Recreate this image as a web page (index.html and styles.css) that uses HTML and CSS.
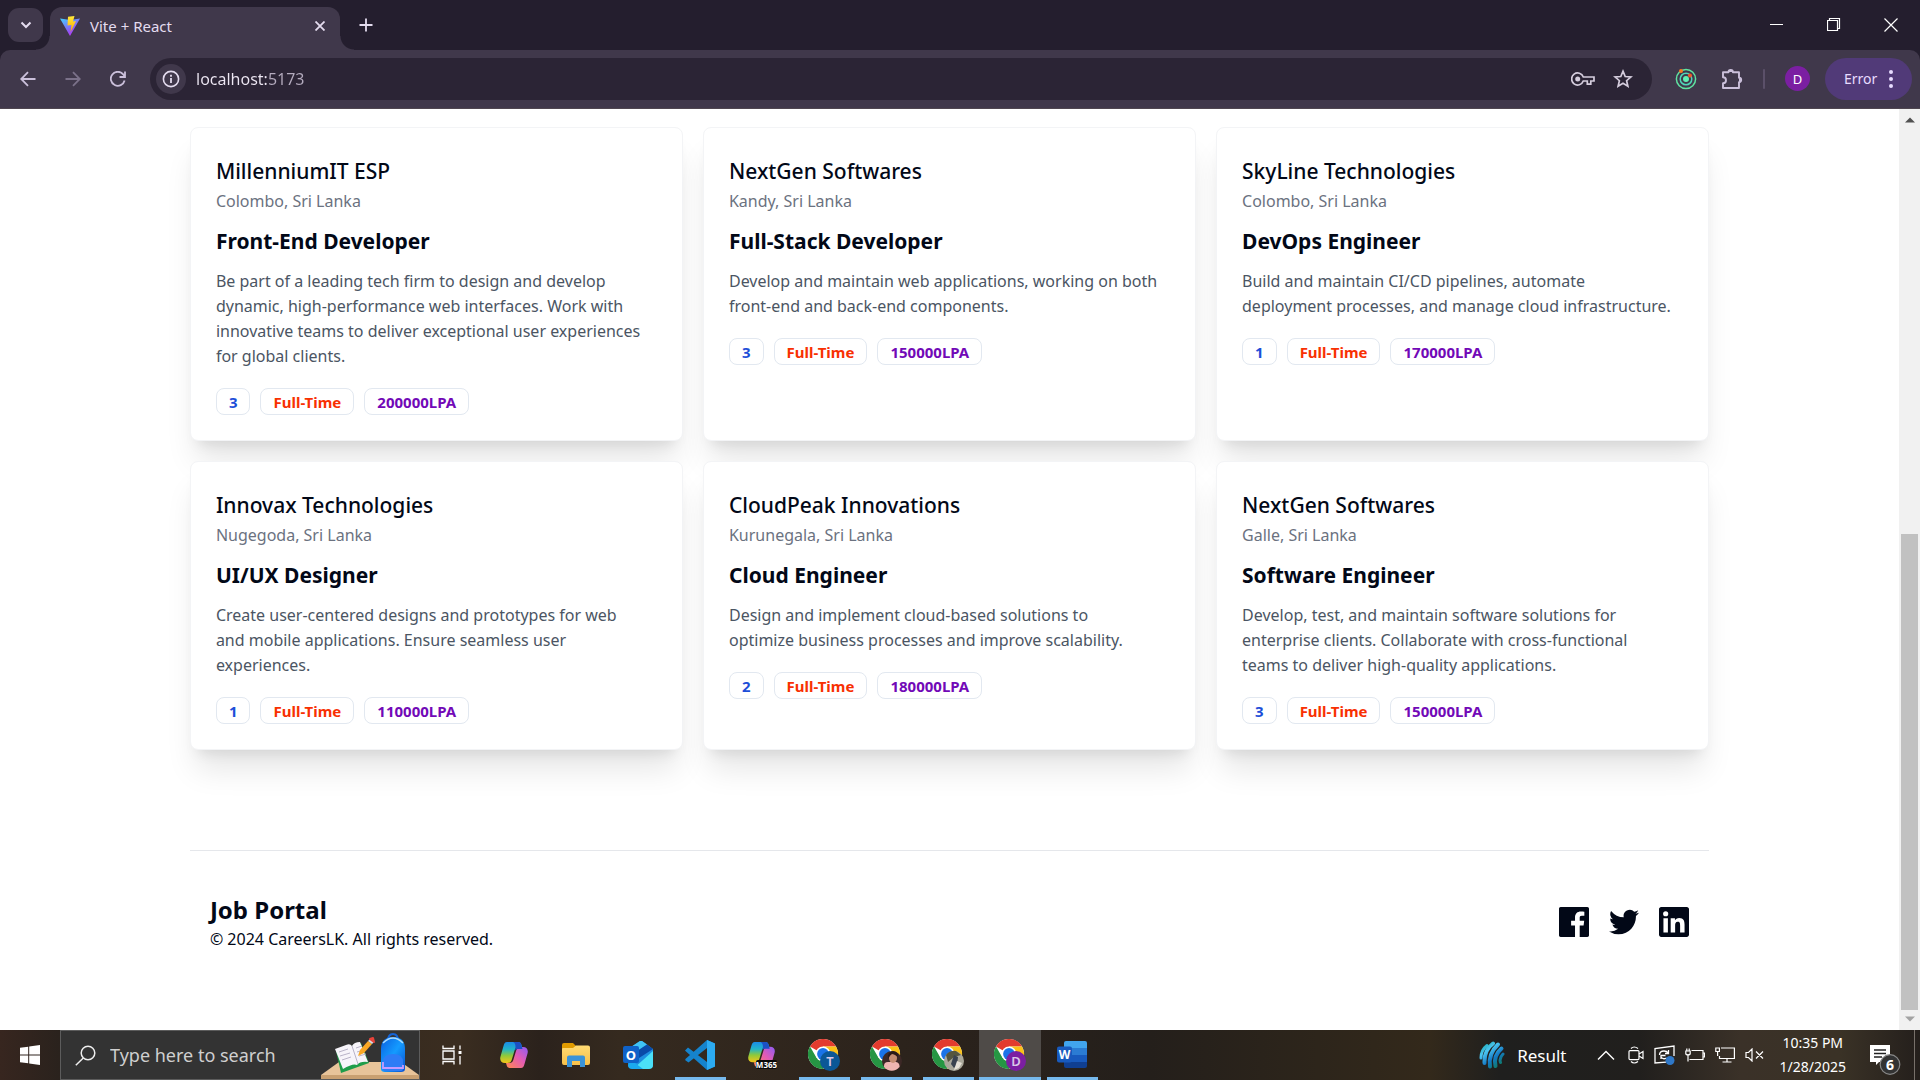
FILE: index.html
```html
<!DOCTYPE html>
<html lang="en">
<head>
<meta charset="utf-8">
<meta name="viewport" content="width=device-width, initial-scale=1">
<title>Vite + React</title>
<link rel="stylesheet" href="styles.css">
</head>
<body>
<svg class="defs" aria-hidden="true">
  <defs>
    <linearGradient id="viteBody" x1="0" y1="0" x2=".6" y2="1"><stop offset="0" stop-color="#41d1ff"/><stop offset=".7" stop-color="#8c5cf5"/><stop offset="1" stop-color="#bd34fe"/></linearGradient>
    <linearGradient id="viteBolt" x1="0" y1="0" x2="0" y2="1"><stop offset="0" stop-color="#ffea3a"/><stop offset="1" stop-color="#ffa800"/></linearGradient>
    <linearGradient id="coLeft" x1="0" y1="0" x2="0" y2="1"><stop offset="0" stop-color="#1a8be8"/><stop offset=".35" stop-color="#22b5c8"/><stop offset=".65" stop-color="#8fc93a"/><stop offset="1" stop-color="#f5c518"/></linearGradient>
    <linearGradient id="coRight" x1="0" y1="1" x2="1" y2="0"><stop offset="0" stop-color="#8b5cf6"/><stop offset=".45" stop-color="#e35bb4"/><stop offset="1" stop-color="#ff8a4c"/></linearGradient>
    <linearGradient id="folder" x1="0" y1="0" x2="0" y2="1"><stop offset="0" stop-color="#ffdb73"/><stop offset="1" stop-color="#f7c04a"/></linearGradient>
    <linearGradient id="bag" x1="0" y1="0" x2="1" y2="1"><stop offset="0" stop-color="#0a5fe0"/><stop offset=".5" stop-color="#149bff"/><stop offset="1" stop-color="#0a50d0"/></linearGradient>
    <linearGradient id="ball" gradientUnits="userSpaceOnUse" x1="2" y1="2" x2="22" y2="28"><stop offset="0" stop-color="#0fa3a3"/><stop offset=".3" stop-color="#4cc6f2"/><stop offset=".6" stop-color="#1479c4"/><stop offset="1" stop-color="#0b7a4a"/></linearGradient>
    <symbol id="chrome" viewBox="0 0 32 32">
      <circle cx="15" cy="15" r="15" fill="#fff"/>
      <path d="M15 15 L2 7.500 A15 15 0 0 1 28 7.500 L15 7.500Z" fill="#e33b2e"/>
      <path d="M28 7.500 A15 15 0 0 1 15 30 L21.500 18.750 L15 7.500Z" fill="#fbc116"/>
      <path d="M2 7.500 A15 15 0 0 0 15 30 L21.500 18.750 L8.500 18.750Z" fill="#269643"/>
      <circle cx="15" cy="15" r="7.500" fill="#fff"/><circle cx="15" cy="15" r="5.900" fill="#1a73e8"/>
    </symbol>
    <symbol id="copilot" viewBox="0 0 28 28">
      <path transform="rotate(180 14 14)" d="M7 1h11c2 0 3 1 3.500 3.200L22 6h-3.500c-2 0-3.200 1-3.800 3L12 18c-.8 2.800-2 4-4.500 4H5C1 22-.5 19 .5 15.500L3.500 5C4.200 2.300 5 1 7 1z" fill="url(#coRight)"/>
      <path d="M7 1h11c2 0 3 1 3.500 3.200L22 6h-3.500c-2 0-3.200 1-3.800 3L12 18c-.8 2.800-2 4-4.500 4H5C1 22-.5 19 .5 15.500L3.500 5C4.200 2.300 5 1 7 1z" fill="url(#coLeft)"/>
      <path d="M13 1h5c2 0 3 1 3.500 3.200L22.500 8H18.500c-1.500 0-2.500 0-3.500 1.500C16 5 15.500 2 13 1z" fill="#1c50c4"/>
    </symbol>
  </defs>
</svg>

<header class="browser">
  <div class="tabstrip">
    <button class="tab-search" aria-label="Search tabs"><svg width="12" height="8" viewBox="0 0 12 8"><path d="M1.500 1.500 6 6l4.500-4.500" fill="none" stroke="currentColor" stroke-width="2"/></svg></button>
    <div class="tab">
      <svg width="20" height="20" viewBox="0 0 20 20"><path d="M0 2.500 10 20 20 2.500 10.500 4z" fill="url(#viteBody)"/><path d="M8 .8 14.500 0l-1.500 5.500 3-.4L10.600 16l.8-7L7.500 9.500z" fill="url(#viteBolt)"/></svg>
      <span class="tab-title">Vite + React</span>
      <button class="plain" aria-label="Close tab"><svg width="10" height="10" viewBox="0 0 10 10"><path d="M.5.5l9 9m0-9-9 9" stroke="currentColor" stroke-width="1.800"/></svg></button>
    </div>
    <button class="plain new-tab" aria-label="New tab"><svg width="14" height="14" viewBox="0 0 14 14"><path d="M7 .5v13M.5 7h13" stroke="currentColor" stroke-width="1.800"/></svg></button>
    <div class="window-buttons">
      <button class="plain" aria-label="Minimize"><svg width="14" height="14" viewBox="0 0 14 14"><path d="M0 6.500h13" stroke="currentColor"/></svg></button>
      <button class="plain" aria-label="Restore"><svg width="14" height="14" viewBox="0 0 14 14"><path d="M.5 2.500h10v10H.5zM2.500 2.500V.5h10v10h-2" fill="none" stroke="currentColor" stroke-width="1.200"/></svg></button>
      <button class="plain" aria-label="Close"><svg width="14" height="14" viewBox="0 0 14 14"><path d="M.5.5l13 13m0-13-13 13" stroke="currentColor" stroke-width="1.200"/></svg></button>
    </div>
  </div>
  <div class="toolbar">
    <div class="nav">
      <button class="plain" aria-label="Back"><svg width="16" height="16" viewBox="0 0 16 16"><path d="M15.500 8H1.500M8 1.200 1.200 8 8 14.800" fill="none" stroke="currentColor" stroke-width="1.800"/></svg></button>
      <button class="plain dim" aria-label="Forward"><svg width="16" height="16" viewBox="0 0 16 16"><path d="M.5 8h14M8 1.200 14.800 8 8 14.800" fill="none" stroke="currentColor" stroke-width="1.800"/></svg></button>
      <button class="plain" aria-label="Reload"><svg width="16" height="16" viewBox="0 0 16 16"><path d="M14.600 9.500A7 7 0 1 1 13.200 3.300L15 5.500M15 .5v5.500H9.500" fill="none" stroke="currentColor" stroke-width="1.800"/></svg></button>
    </div>
    <div class="omnibox">
      <button class="site-info" aria-label="View site information"><svg width="18" height="18" viewBox="0 0 18 18"><circle cx="9" cy="9" r="7.600" fill="none" stroke="currentColor" stroke-width="1.600"/><path d="M9 8v5M9 4.800v1.900" stroke="currentColor" stroke-width="1.800"/></svg></button>
      <input class="url" type="text" value="localhost:5173" aria-label="Address">
      <button class="plain" aria-label="Passwords"><svg width="24" height="14" viewBox="0 0 24 14"><path d="M12.300 5A6 6 0 1 0 12.300 9h4v3.200h3.500V9H23V5z" fill="none" stroke="currentColor" stroke-width="1.700"/><circle cx="6.700" cy="7" r="2.500" fill="currentColor"/></svg></button>
      <button class="plain" aria-label="Bookmark this tab"><svg width="20" height="20" viewBox="0 0 20 20"><path d="M10 2.200l2.200 5.300 5.700.5-4.300 3.700 1.300 5.600-4.900-3-4.900 3 1.300-5.600L2.100 8l5.700-.5z" fill="none" stroke="currentColor" stroke-width="1.700"/></svg></button>
    </div>
    <div class="actions">
      <button class="plain" aria-label="Extension"><svg width="22" height="22" viewBox="0 0 22 22"><g fill="none" stroke="#5fe3a1" stroke-width="1.500"><circle cx="11" cy="11" r="9.600"/><circle cx="11" cy="11" r="5.800" stroke="#4fd6b8"/></g><circle cx="11" cy="11" r="3" fill="#5ff0b4"/><circle cx="6" cy="3" r="2" fill="#f97b22"/><circle cx="15" cy="7.500" r="2" fill="#f0562a"/></svg></button>
      <button class="plain puzzle" aria-label="Extensions"><svg width="22" height="22" viewBox="0 0 22 22"><path d="M2 4.200h5.500a2.200 2.200 0 0 1 4.400 0H18v5.500a2.200 2.200 0 0 1 0 4.400V20H2v-4.800c4 0 4-6 0-6z" fill="none" stroke="currentColor" stroke-width="1.900" stroke-linejoin="round"/><path d="M7.500 4a2.200 2.200 0 0 1 4.400 0zM18 9.700a2.200 2.200 0 0 1 0 4.400z" fill="currentColor"/></svg></button>
      <span class="sep"></span>
      <button class="avatar" aria-label="Profile">D</button>
      <button class="error">Error <svg width="4" height="18" viewBox="0 0 4 18"><g fill="currentColor"><circle cx="2" cy="2" r="2"/><circle cx="2" cy="9" r="2"/><circle cx="2" cy="16" r="2"/></g></svg></button>
    </div>
  </div>
</header>

<div class="viewport">
  <div class="page">
    <main class="jobs">
      <article class="card">
        <h2 class="company">MillenniumIT ESP</h2><p class="place">Colombo, Sri Lanka</p>
        <h3 class="role">Front-End Developer</h3>
        <p class="desc">Be part of a leading tech firm to design and develop dynamic, high-performance web interfaces. Work with innovative teams to deliver exceptional user experiences for global clients.</p>
        <div class="tags"><span class="tag count">3</span><span class="tag type">Full-Time</span><span class="tag pay">200000LPA</span></div>
      </article>
      <article class="card">
        <h2 class="company">NextGen Softwares</h2><p class="place">Kandy, Sri Lanka</p>
        <h3 class="role">Full-Stack Developer</h3>
        <p class="desc">Develop and maintain web applications, working on both front-end and back-end components.</p>
        <div class="tags"><span class="tag count">3</span><span class="tag type">Full-Time</span><span class="tag pay">150000LPA</span></div>
      </article>
      <article class="card">
        <h2 class="company">SkyLine Technologies</h2><p class="place">Colombo, Sri Lanka</p>
        <h3 class="role">DevOps Engineer</h3>
        <p class="desc">Build and maintain CI/CD pipelines, automate <br>deployment processes, and manage cloud infrastructure.</p>
        <div class="tags"><span class="tag count">1</span><span class="tag type">Full-Time</span><span class="tag pay">170000LPA</span></div>
      </article>
      <article class="card">
        <h2 class="company">Innovax Technologies</h2><p class="place">Nugegoda, Sri Lanka</p>
        <h3 class="role">UI/UX Designer</h3>
        <p class="desc">Create user-centered designs and prototypes for web <br>and mobile applications. Ensure seamless user <br>experiences.</p>
        <div class="tags"><span class="tag count">1</span><span class="tag type">Full-Time</span><span class="tag pay">110000LPA</span></div>
      </article>
      <article class="card">
        <h2 class="company">CloudPeak Innovations</h2><p class="place">Kurunegala, Sri Lanka</p>
        <h3 class="role">Cloud Engineer</h3>
        <p class="desc">Design and implement cloud-based solutions to <br>optimize business processes and improve scalability.</p>
        <div class="tags"><span class="tag count">2</span><span class="tag type">Full-Time</span><span class="tag pay">180000LPA</span></div>
      </article>
      <article class="card">
        <h2 class="company">NextGen Softwares</h2><p class="place">Galle, Sri Lanka</p>
        <h3 class="role">Software Engineer</h3>
        <p class="desc">Develop, test, and maintain software solutions for <br>enterprise clients. Collaborate with cross-functional <br>teams to deliver high-quality applications.</p>
        <div class="tags"><span class="tag count">3</span><span class="tag type">Full-Time</span><span class="tag pay">150000LPA</span></div>
      </article>
    </main>
    <footer class="footer">
      <div>
        <h2 class="brand">Job Portal</h2>
        <p class="copyright">© 2024 CareersLK. All rights reserved.</p>
      </div>
      <nav class="social" aria-label="Social">
        <a href="#facebook" aria-label="Facebook"><svg viewBox="0 0 24 24"><path d="M22.676 0H1.324C.593 0 0 .593 0 1.324v21.352C0 23.408.593 24 1.324 24h11.494v-9.294H9.689v-3.621h3.129V8.410c0-3.099 1.894-4.785 4.659-4.785 1.325 0 2.464.097 2.796.141v3.240h-1.921c-1.500 0-1.792.721-1.792 1.771v2.311h3.584l-.465 3.630H16.560V24h6.115c.733 0 1.325-.592 1.325-1.324V1.324C24 .593 23.408 0 22.676 0"/></svg></a>
        <a href="#twitter" aria-label="Twitter"><svg viewBox="0 0 24 24"><path d="M24 4.557a9.830 9.830 0 0 1-2.828.775 4.932 4.932 0 0 0 2.165-2.724 9.864 9.864 0 0 1-3.127 1.195 4.916 4.916 0 0 0-8.384 4.482A13.980 13.980 0 0 1 1.671 3.149 4.930 4.930 0 0 0 3.194 9.723 4.903 4.903 0 0 1 .967 9.110v.060a4.926 4.926 0 0 0 3.946 4.827 4.996 4.996 0 0 1-2.212.085 4.937 4.937 0 0 0 4.604 3.417A9.868 9.868 0 0 1 0 19.540a13.995 13.995 0 0 0 7.548 2.212c9.142 0 14.307-7.721 13.995-14.646A10.025 10.025 0 0 0 24 4.557z"/></svg></a>
        <a href="#linkedin" aria-label="LinkedIn"><svg viewBox="0 0 24 24"><path d="M20.447 20.452h-3.554v-5.569c0-1.328-.027-3.037-1.852-3.037-1.853 0-2.136 1.445-2.136 2.939v5.667H9.351V9h3.414v1.561h.046c.477-.9 1.637-1.850 3.370-1.850 3.601 0 4.267 2.370 4.267 5.455v6.286zM5.337 7.433a2.062 2.062 0 0 1-2.063-2.065 2.064 2.064 0 1 1 2.063 2.065zm1.782 13.019H3.555V9h3.564v11.452zM22.225 0H1.771C.792 0 0 .774 0 1.729v20.542C0 23.227.792 24 1.771 24h20.451C23.200 24 24 23.227 24 22.271V1.729C24 .774 23.200 0 22.222 0h.003z"/></svg></a>
      </nav>
    </footer>
  </div>
  <div class="scrollbar" aria-hidden="true">
    <svg width="10" height="6" viewBox="0 0 10 6"><path d="M0 5.500 5 .5l5 5z" fill="#505050"/></svg>
    <div class="track"><div class="thumb"></div></div>
    <svg width="10" height="6" viewBox="0 0 10 6"><path d="M0 .5h10l-5 5z" fill="#a3a3a3"/></svg>
  </div>
</div>

<div class="taskbar">
  <button class="start" aria-label="Start"><svg width="20" height="20" viewBox="0 0 20 20" fill="#fff"><path d="M0 2.800 8.200 1.700v7.800H0zM9.200 1.500 20 0v9.500H9.200zM0 10.500h8.200v7.800L0 17.200zM9.200 10.500H20V20L9.200 18.500z"/></svg></button>
  <div class="search">
    <svg width="21" height="21" viewBox="0 0 21 21"><circle cx="13" cy="8" r="6.800" fill="none" stroke="#eee" stroke-width="1.500"/><path d="M8.300 13 .8 20.300" stroke="#eee" stroke-width="1.500"/></svg>
    <input type="text" placeholder="Type here to search" aria-label="Type here to search">
    <svg class="art" width="98" height="48" viewBox="0 0 98 48">
      <path d="M0 44 18 31h62l18 13z" fill="#e8c49a"/><path d="M0 44h98v4H0z" fill="#c9a071"/>
      <path d="M15 20 40 12l8 20-28 10z" fill="#1f9d4a"/><path d="M14 18l11-4q4-2 6 1 2-4 8-4l8 20q-8-1-11 3-4-2-14 4z" fill="#f7f4fa"/><path d="M31 15l6 18M18 21l9-3M19 25l10-3M21 29l9-3M35 17l6-2M36 21l7-2M38 25l7-2" stroke="#b9b3c8" stroke-width="1"/>
      <path d="M37 25l2-6 8-9 4 3-8 9z" fill="#f9a825"/><path d="M47 10l2-2 4 3-2 2z" fill="#d8dce6"/><path d="M49 8l3-1 1 4z" fill="#e8433a" stroke="#e8433a" stroke-width="2" stroke-linejoin="round"/>
      <path d="M67 10q0-7 5-7t5 7" fill="none" stroke="#1463d6" stroke-width="2"/>
      <path d="M60 38V18Q60 6 72 6t12 12v20q0 3-4 3H64q-4 0-4-3z" fill="url(#bag)"/><path d="M62 12q10-10 20 0" fill="none" stroke="#a9dcff" stroke-width="1.500"/>
      <path d="M62 38v-7q0-8 10-8t10 8v7q0 2-3 2H65q-3 0-3-2z" fill="#2e7cf6"/><path d="M62 31v6h20v-3" fill="none" stroke="#c59bff" stroke-width="1.800"/>
    </svg>
  </div>
  <div class="apps">
    <button aria-label="Task View"><svg width="20" height="20" viewBox="0 0 20 20"><g fill="none" stroke="#fff" stroke-width="1.300"><path d="M1 .5v3h11v-3M1 6h11v8H1zM1 19.500v-3h11v3M18 .5v4M18 11v8.500"/></g><path d="M16.500 6h3v3h-3z" fill="#fff"/></svg></button>
    <button aria-label="Copilot"><svg width="28" height="28"><use href="#copilot"/></svg></button>
    <button aria-label="File Explorer"><svg width="28" height="24" viewBox="0 0 28 24"><path d="M0 2q0-2 2-2h9l3 3v6H0z" fill="#e09b00"/><path d="M0 6q0-1 1-1h10l3-2.500h12q2 0 2 2V20q0 2-2 2H2q-2 0-2-2z" fill="url(#folder)"/><path d="M5 24V14.500q0-2 2-2h14q2 0 2 2V24h-5v-6h-8v6z" fill="#3a93d8"/></svg></button>
    <button aria-label="Outlook"><svg width="30" height="28" viewBox="0 0 30 28"><path d="M5 8 17 0q1-.5 2 0l11 8v16q0 3-3 3H9q-4 0-4-4z" fill="#1e8fe0"/><path d="M17 0q1-.5 2 0l5 3.500L7 15l-2-7z" fill="#3fc3f5"/><path d="M24 3.500 30 8 13 19l-5-5z" fill="#0a4aa8"/><path d="M30 10v14q0 4-4 4H10z" fill="#4be0f7"/><path d="M8 19l12 9H9q-4 0-4-4z" fill="#1ba9ee"/><rect y="5" width="16" height="17" rx="2" fill="#0f62c8"/><text x="8" y="18.500" class="mark" font-size="13">O</text></svg></button>
    <button class="open" aria-label="Visual Studio Code"><svg width="30" height="30" viewBox="0 0 30 30"><path d="M22 0 30 3.500v23L22 30 1 11.500 0 10.500 3 7.500 22 22z" fill="#1583cc"/><path d="M22 0 22 8 3.500 22.500 0 20 1 18.500z" fill="#1583cc"/><path d="M22 0l8 3.500v23L22 30z" fill="#2cabf2"/></svg></button>
    <button aria-label="Microsoft 365 Copilot"><svg width="30" height="28" viewBox="0 0 30 28"><use href="#copilot" width="29" height="27"/><rect x="9" y="19" width="21" height="9" rx="2" fill="#0a0a0a"/><text x="19.500" y="26.500" class="mark" font-size="8">M365</text></svg></button>
    <button class="open" aria-label="Chrome, profile T"><svg width="32" height="32" viewBox="0 0 32 32"><use href="#chrome" width="32" height="32"/><circle cx="22" cy="22" r="10" fill="#0b5796"/><text x="22" y="26.500" class="mark soft" font-size="13">T</text></svg></button>
    <button class="open" aria-label="Chrome, second profile"><svg width="32" height="32" viewBox="0 0 32 32"><use href="#chrome" width="32" height="32"/><circle cx="22" cy="22" r="10" fill="#3c2826"/><path d="M14 27q0-4 4-4l8 0q4 1 3.500 5A10 10 0 0 1 14 28z" fill="#efb5b0"/><ellipse cx="23" cy="19" rx="4" ry="5" fill="#c58d72"/><path d="M18 20q-1-7 5-8 6 1 5 6-4-3-6-3-2 1-4 5z" fill="#2a1a18"/></svg></button>
    <button class="open" aria-label="Chrome, third profile"><svg width="32" height="32" viewBox="0 0 32 32"><use href="#chrome" width="32" height="32"/><circle cx="22" cy="22" r="10" fill="#a9a79a"/><path d="M14 16q4-5 10-4l5 4-7 2-6 5z" fill="#55563f"/><path d="M22 16l4 2-1 8-3 3-3-4z" fill="#39424f"/><path d="M25 22l5 2-3 5-5 2z" fill="#e5e0d6"/></svg></button>
    <button class="open active" aria-label="Chrome, profile D"><svg width="32" height="32" viewBox="0 0 32 32"><use href="#chrome" width="32" height="32"/><circle cx="22" cy="22" r="10" fill="#7b1fa2"/><text x="22" y="26.500" class="mark soft" font-size="13">D</text></svg></button>
    <button class="open" aria-label="Word"><svg width="30" height="28" viewBox="0 0 30 28"><path d="M7 2q0-2 2-2h19q2 0 2 2v5H7z" fill="#41a5ee"/><path d="M7 7h23v7H7z" fill="#2b7cd3"/><path d="M7 14h23v7H7z" fill="#185abd"/><path d="M7 21h23v4q0 2-2 2H9q-2 0-2-2z" fill="#103f91"/><rect y="5.500" width="15" height="16" rx="2" fill="#185abd"/><text x="7.500" y="18" class="mark" font-size="12">W</text></svg></button>
  </div>
  <div class="tray">
    <button class="news"><svg width="26" height="28" viewBox="0 0 26 28"><g fill="none" stroke="url(#ball)" stroke-linecap="round"><path d="M2 17Q2 9 8 4.500" stroke-width="3"/><path d="M5.500 22Q5 9 14 2.500" stroke-width="4"/><path d="M11 25.500Q9 13 19 3.500" stroke-width="4"/><path d="M16.500 25Q14 15 22.500 7.500" stroke-width="4"/><path d="M21.500 21.500Q20 17 24 13" stroke-width="3"/></g></svg>Result</button>
    <button class="more" aria-label="Show hidden icons"><svg width="18" height="10" viewBox="0 0 18 10"><path d="M1 9.500l8-8 8 8" fill="none" stroke="#fff" stroke-width="1.400"/></svg></button>
    <button aria-label="Meet Now"><svg width="16" height="18" viewBox="0 0 16 18"><g fill="none" stroke="#fff" stroke-width="1.200"><rect x="1" y="4.600" width="10" height="9" rx="1"/><path d="M11 8l4-2.500v7L11 10M3 2.500q3-3 7 0M3 15.500q3 3 7 0"/></g></svg></button>
    <button aria-label="Updates"><svg width="21" height="20" viewBox="0 0 21 20"><g fill="none" stroke="#fff" stroke-width="1.300"><path d="M20 11V1L1 3.500V18l11-.8M5.500 10q0-4 4.500-4 3 0 4 2M14.500 5v3.500H11M11.500 10.500H7V14M7 12q2 3 5.500 1"/></g><circle cx="16" cy="15.500" r="4.500" fill="#2f78c8"/></svg></button>
    <button aria-label="Battery"><svg width="20" height="14" viewBox="0 0 20 14"><g fill="none" stroke="#fff" stroke-width="1.200"><path d="M6.500 2.500H18v9H4.500M18 5h1.500v4H18M.8 3h4.400v3q-2.200 2-4.400 0zM1.800 3V.5M4.200 3V.5M3 7v6.500"/></g></svg></button>
    <button aria-label="Network"><svg width="20" height="16" viewBox="0 0 20 16"><g fill="none" stroke="#fff" stroke-width="1.200"><path d="M6 1h13.400v10.500H4.500V9M12 11.500v3.500M7.500 15h9M.8 1h3.600v3.500H.8zM2.600 4.500V9"/></g></svg></button>
    <button aria-label="Muted"><svg width="19" height="14" viewBox="0 0 19 14"><g fill="none" stroke="#fff" stroke-width="1.200"><path d="M1 4.500h2.500L7 1v12L3.500 9.500H1zM11 3.500l7 7m0-7-7 7"/></g></svg></button>
    <button class="clock">10:35 PM<br>1/28/2025</button>
    <button class="notes" aria-label="Notifications"><svg width="31" height="31" viewBox="0 0 31 31"><path d="M0 0h20v17H9l-3 3v-3H0z" fill="#fff"/><path d="M4 5h12M4 8.500h12M4 12h8" stroke="#222" stroke-width="1.300"/><circle cx="20" cy="19.500" r="9.800" fill="#333" stroke="#888" stroke-width="1.200"/><text x="20" y="24.500" class="mark" font-size="14">6</text></svg></button>
    <span class="desktop-edge"></span>
  </div>
</div>
</body>
</html>
```
FILE: styles.css
```css
*, *::before, *::after { box-sizing: border-box; }
body { margin: 0; min-height: 100vh; display: flex; flex-direction: column; background: #fff; font-family: "Noto Sans", "Open Sans", sans-serif; color: #020817; }
h2, h3, p { margin: 0; }
button { font: inherit; color: inherit; background: none; border: 0; padding: 0; }
input { font: inherit; border: 0; background: none; padding: 0; outline: 0; min-width: 0; }
svg { display: block; flex: none; }
.defs { position: absolute; width: 0; height: 0; }
.mark { fill: #fff; font-weight: 700; text-anchor: middle; }
.soft { fill: #d9c8e8; font-weight: 600; }

/* Browser chrome */
.browser { background: #241e2e; color: #e4dcef; }
.tabstrip { display: flex; align-items: center; height: 50px; padding: 0 1px 0 8px; }
.plain { display: flex; align-items: center; justify-content: center; }
.tab-search { display: flex; align-items: center; justify-content: center; width: 35px; height: 34px; margin-right: 7px; border-radius: 11px; background: #40384b; }
.tab { position: relative; display: flex; align-items: center; gap: 10px; align-self: flex-end; width: 290px; height: 43px; padding: 0 15px 6px 10px; border-radius: 12px 12px 0 0; background: #40384b; font-size: 15px; }
.tab::before, .tab::after { content: ""; position: absolute; bottom: 0; width: 14px; height: 14px; }
.tab::before { right: 100%; background: radial-gradient(circle at 0 0, transparent 13px, #40384b 14px); }
.tab::after { left: 100%; background: radial-gradient(circle at 100% 0, transparent 13px, #40384b 14px); }
.tab-title { flex: 1; }
.new-tab { width: 52px; height: 50px; }
.window-buttons { display: flex; margin-left: auto; color: #fff; }
.window-buttons .plain { width: 57px; height: 48px; }
.toolbar { display: flex; align-items: center; height: 59px; padding: 0 8px 1px 20px; border-radius: 10px 10px 0 0; border-bottom: 1px solid #4f4650; background: #40384b; color: #cbc0db; }
.nav { display: flex; gap: 29px; width: 130px; }
.dim { color: #7b7189; }
.omnibox { display: flex; align-items: center; flex: 1; height: 42px; padding: 0 19px 0 6px; border-radius: 21px; background: #2b2435; color: #d5cddd; }
.site-info { display: flex; align-items: center; justify-content: center; width: 30px; height: 30px; border-radius: 50%; background: #40384b; color: #e4dcef; }
.url { flex: 1; margin-left: 10px; font-size: 16px; color: transparent; background: linear-gradient(90deg, #eee8f4 72px, #b4abbe 72px); background-clip: text; -webkit-background-clip: text; }
.omnibox .plain { margin-left: 18px; }
.actions { display: flex; align-items: center; padding-left: 23px; }
.puzzle { margin: 0 20px 0 24px; }
.sep { width: 2px; height: 20px; border-radius: 1px; background: #5b5069; }
.avatar { width: 25px; height: 25px; margin: 0 15px 0 20px; border-radius: 50%; background: #7b1fa2; color: #fff; font-size: 13px; }
.error { display: flex; align-items: center; justify-content: space-between; width: 87px; height: 42px; padding: 0 19px; border-radius: 21px; background: #513a78; color: #e8dcff; font-size: 14px; }

/* Page */
.viewport { flex: 1; display: flex; }
.page { flex: 1; padding-top: 18px; }
.jobs { display: grid; grid-template-columns: repeat(3, 1fr); gap: 20px; margin: 0 10%; }
.card { padding: 26px 25px 25px; border: 1px solid #f3f4f6; border-radius: 8px; background: #fff; box-shadow: 0 25px 31px -6px rgba(0, 0, 0, .1), 0 10px 13px -8px rgba(0, 0, 0, .1); }
.company { font-size: 21px; line-height: 35px; font-weight: 500; }
.place { font-size: 16px; line-height: 25px; color: #6b7280; }
.role { margin: 10px 0; font-size: 21px; line-height: 35px; font-weight: 700; }
.desc { font-size: 16px; line-height: 25px; color: #4b5563; }
.tags { display: flex; gap: 10px; margin-top: 19px; }
.tag { padding: 1px 12px 0; border: 1px solid #e2e8f0; border-radius: 8px; font-size: 15px; line-height: 24px; font-weight: 700; }
.count { color: #1d4ed8; }
.type { color: #f83002; }
.pay { color: #7209b7; }
.footer { display: flex; align-items: center; justify-content: space-between; margin: 100px 10% 0; padding: 41px 20px 40px; border-top: 1px solid #e5e7eb; }
.brand { font-size: 24px; line-height: 35px; font-weight: 700; }
.copyright { font-size: 16px; line-height: 25px; }
.social { display: flex; gap: 20px; }
.social svg { width: 30px; height: 30px; fill: #020817; }
.scrollbar { display: flex; flex-direction: column; align-items: center; justify-content: space-between; width: 21px; padding: 8px 0; background: #f1f1f1; }
.track { flex: 1; display: flex; align-items: flex-end; margin: 6px 0; }
.thumb { width: 17px; height: 54%; background: #c1c1c1; }

/* Taskbar */
.taskbar { display: flex; height: 50px; background: linear-gradient(90deg, #37261f 0, #2a221d 60px, #3a2d20 460px, #2b221c 540px, #352a1f 620px, #2c231c 900px, #241f1b 1150px, #33291b 1430px, #1f1f1e 1500px, #211f1d 1640px, #3a3128 1740px, #3a3226 1840px, #241f1c 1920px); color: #fff; }
.start { display: flex; align-items: center; justify-content: center; width: 60px; }
.search { display: flex; align-items: center; width: 360px; padding-left: 14px; border: 1px solid #5c5c5c; background: #333; font-size: 18px; }
.search input { flex: 1; margin-left: 14px; color: #fff; }
.search input::placeholder { color: #cfcfcf; opacity: 1; }
.art { margin-left: auto; }
.apps { display: flex; padding-left: 1px; }
.apps button { display: flex; align-items: center; justify-content: center; width: 62px; padding-bottom: 1px; }
.open { background: linear-gradient(#76b9ed, #76b9ed) center bottom / 51px 3px no-repeat; }
.active { background-color: #4f4b48; background-size: 100% 3px; }
.tray { display: flex; align-items: center; gap: 10px; margin-left: auto; }
.news { display: flex; align-items: center; gap: 12px; margin-right: 20px; font-size: 17px; }
.more { margin-right: 3px; }
.clock { margin: 0 14px 0 6px; font-size: 14px; line-height: 24px; text-align: center; }
.notes { padding: 10px 3px 0 0; }
.desktop-edge { width: 6px; height: 50px; border-left: 1px solid #77706a; }
```
